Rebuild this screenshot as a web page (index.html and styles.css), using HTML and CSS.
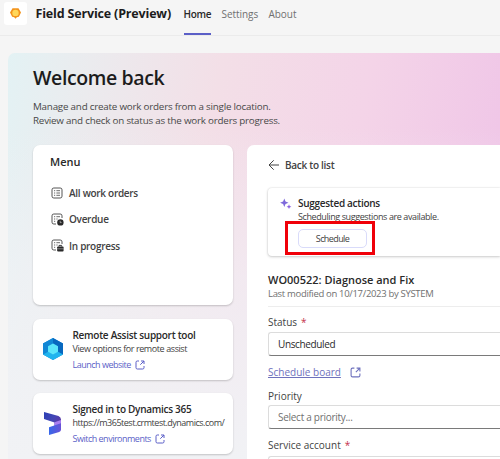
FILE: index.html
```html
<!DOCTYPE html>
<html lang="en">
<head>
<meta charset="utf-8">
<title>Field Service (Preview)</title>
<link rel="stylesheet" href="styles.css">
</head>
<body>
<svg width="0" height="0" class="defs">
  <defs>
    <symbol id="open" viewBox="0 0 10 10"><path d="M4 1H2.3Q1 1 1 2.3V7.7Q1 9 2.3 9H7.7Q9 9 9 7.7V6M6 1H9V4M9 1L5.3 4.7" fill="none" stroke="currentColor" stroke-width="1"/></symbol>
    <symbol id="list" viewBox="0 0 12 12"><rect x="1" y="1" width="10" height="10" rx="1.8" fill="none" stroke="currentColor" stroke-width=".9"/><path d="M3 3.7H4.2M3 6H4.2M3 8.3H4.2M5.4 3.7H9M5.4 6H9M5.4 8.3H9" stroke="currentColor" stroke-width=".8"/></symbol>
    <symbol id="list-cut" viewBox="0 0 12 12"><path d="M5 11H2.8Q1 11 1 9.2V2.8Q1 1 2.8 1H9.2Q11 1 11 2.8V5" fill="none" stroke="currentColor" stroke-width=".9"/><path d="M3 3.7H4.2M3 6H4.2M3 8.3H4.2M5.4 3.7H9M5.4 6H6.6" fill="none" stroke="currentColor" stroke-width=".8"/></symbol>
  </defs>
</svg>
<header class="topbar">
  <div class="logo"><svg width="13" height="13" viewBox="0 0 13 13"><path d="M3.5 1.2H9.5L12 5.4 9.9 9.8 7.8 10.3 6.5 11.8 5.2 10.3 3.1 9.8 1 5.4Z" fill="#f3941c"/><circle cx="6.5" cy="5.9" r="3.2" fill="#ffd75a"/></svg></div>
  <h1 class="app-name">Field Service (Preview)</h1>
  <nav class="tabs"><a class="tab active">Home</a><a class="tab">Settings</a><a class="tab">About</a></nav>
</header>
<main class="hero">
  <h2 class="welcome">Welcome back</h2>
  <p class="intro">Manage and create work orders from a single location.<br>Review and check on status as the work orders progress.</p>
  <div class="columns">
    <aside class="side">
      <section class="card menu">
        <h3 class="menu-title">Menu</h3>
        <a class="menu-item"><svg width="12" height="12"><use href="#list"/></svg><span>All work orders</span></a>
        <a class="menu-item"><svg class="badged" width="13" height="13" viewBox="0 0 13 13"><use href="#list-cut" width="12" height="12"/><circle cx="9.4" cy="9.4" r="3.2" fill="#292929"/><path d="M9.2 7.8V9.6H10.6" fill="none" stroke="#ddd" stroke-width=".6"/></svg><span>Overdue</span></a>
        <a class="menu-item"><svg class="badged" width="13" height="13" viewBox="0 0 13 13"><use href="#list-cut" width="12" height="12"/><path d="M8 7.4V6.4H10.6V7.4" fill="none" stroke="#292929" stroke-width=".9"/><rect x="6.1" y="7.4" width="6.5" height="5" rx="1" fill="#292929"/><path d="M6.1 9.8H12.6" stroke="#ddd" stroke-width=".5"/></svg><span>In progress</span></a>
      </section>
      <section class="card tool">
        <svg class="tool-icon" width="22" height="24" viewBox="0 0 22 24"><path d="M11 1L21 6.5V17.5L11 23 1 17.5V6.5Z" fill="#0c8ee0"/><path d="M11 1L21 6.5V17.5L15.5 14.5V9.2L11 6.5Z" fill="#0868bf"/><path d="M1 6.5L11 1V6.5L6.2 9.2V14.7L1 17.5Z" fill="#1187d5"/><path d="M1 17.5L6.2 14.7 11 17.3 15.5 14.5 21 17.5 11 23Z" fill="#20b4ee"/><path d="M11 6.4L16 9.2V14.8L11 17.6 6 14.8V9.2Z" fill="#5ce6fa"/></svg>
        <div><h4 class="t1">Remote Assist support tool</h4><p class="t2">View options for remote assist</p><a class="link"><span>Launch website</span><svg width="10" height="10"><use href="#open"/></svg></a></div>
      </section>
      <section class="card tool">
        <svg class="tool-icon" width="22" height="24" viewBox="0 0 22 24"><defs><linearGradient id="dyn" x2="1" y2=".5"><stop stop-color="#2b3fb5"/><stop offset=".6" stop-color="#4347b5"/><stop offset="1" stop-color="#5a3aa8"/></linearGradient><linearGradient id="dyn2" x2="1" y2="0"><stop stop-color="#3668ea"/><stop offset="1" stop-color="#6a52d6"/></linearGradient></defs><path d="M2 1L16.5 5Q19 6 19 8.5V13L12.5 15V11.5L2 8Z" fill="url(#dyn)"/><path d="M12.5 11.2L19 9V12.8L12.5 15.2Z" fill="#a97df0"/><path d="M7 16.2L19 12.2V18.5Q19 20.3 17.2 21L7 24Z" fill="url(#dyn2)"/></svg>
        <div><h4 class="t1">Signed in to Dynamics 365</h4><p class="t2 url">https://m365test.crmtest.dynamics.com/</p><a class="link"><span>Switch environments</span><svg width="10" height="10"><use href="#open"/></svg></a></div>
      </section>
    </aside>
    <section class="panel">
      <a class="back"><svg width="12" height="12" viewBox="0 0 12 12"><path d="M5.7 1.3L1 6L5.7 10.7M1 6H11" fill="none" stroke="#424242" stroke-width="1"/></svg><span>Back to list</span></a>
      <div class="suggest">
        <svg class="spark" width="12" height="12" viewBox="0 0 12 12"><path d="M4.3 .6L5.5 3.6 8.5 4.8 5.5 6 4.3 9 3.1 6 .1 4.8 3.1 3.6Z" fill="#7e69db"/><path d="M9 6.3L9.7 8 11.4 8.7 9.7 9.4 9 11.1 8.3 9.4 6.6 8.7 8.3 8Z" fill="#8a62e0"/></svg>
        <div><h4 class="s1">Suggested actions</h4><p class="s2">Scheduling suggestions are available.</p><div class="btn-wrap"><button class="btn">Schedule</button><div class="highlight"></div></div></div>
      </div>
      <h3 class="order">WO00522: Diagnose and Fix</h3>
      <p class="modified">Last modified on 10/17/2023 by SYSTEM</p>
      <label class="label status"><span>Status</span><i>*</i></label>
      <div class="field">Unscheduled</div>
      <a class="board"><span>Schedule board</span><svg width="11" height="11"><use href="#open"/></svg></a>
      <label class="label priority"><span>Priority</span></label>
      <div class="field hint">Select a priority...</div>
      <label class="label account"><span>Service account</span><i>*</i></label>
      <div class="field cut"></div>
    </section>
  </div>
</main>
</body>
</html>
```
FILE: styles.css
```css
* { box-sizing: border-box; }
html, body { height: 100%; overflow: hidden; }
body { margin: 0; background: #f5f5f5; color: #292929; font: 10px/14px "Open Sans", "Noto Sans", sans-serif; }
h1, h2, h3, h4, p { margin: 0; font-weight: 600; }
p { font-weight: 400; }
svg { display: block; flex: none; }
span, h1, h2, h3, h4, p { white-space: nowrap; }
.defs { position: absolute; }
.topbar { height: 36px; display: flex; border-bottom: 1px solid #ebebeb; padding-left: 4px; }
.logo { width: 23px; height: 23px; margin-top: 2px; background: #fff; border-radius: 3px; display: flex; align-items: center; justify-content: center; }
.app-name { width: 148px; margin-left: 8.5px; font-size: 12.5px; line-height: 27px; font-weight: 700; color: #1c1c1c; letter-spacing: -.17px; }
.tabs { display: flex; gap: 11px; }
.tab { font-size: 10px; line-height: 29px; height: 35px; color: #707070; width: 36px; letter-spacing: -.05px; }
.active { width: 27px; font-weight: 600; color: #292929; border-bottom: 2px solid #5b5fc7; letter-spacing: -.3px; }
.hero { margin: 17px 0 0 8px; padding: 13px 0 0 25px; height: 406px; overflow: hidden; border-top-left-radius: 7px; background: linear-gradient(180deg, rgba(241,243,246,0) 18%, rgba(241,243,246,.6) 55%, #f1f2f5 100%), linear-gradient(100deg, #e3f2f4 0%, #ebebee 15%, #f3dfe7 38%, #f4d4e8 65%, #efc4e7 95%); }
.welcome { font-size: 19.5px; line-height: 24px; color: #1c1c1c; letter-spacing: -.38px; }
.intro { margin-top: 10px; font-size: 9.8px; line-height: 14px; color: #484848; letter-spacing: -.21px; }
.columns { display: flex; gap: 14px; margin-top: 17px; }
.side { width: 200px; display: flex; flex-direction: column; gap: 14px; }
.card { background: #fff; border-radius: 7px; box-shadow: 0 1px 2px rgba(0,0,0,.2); }
.menu { height: 160px; padding: 10px 17px; }
.menu-title { font-size: 11px; line-height: 14px; margin-bottom: 11px; }
.menu-item { display: flex; align-items: center; gap: 6px; height: 26.3px; padding-left: 1px; color: #424242; font-weight: 600; letter-spacing: -.29px; }
.badged { margin-right: -1px; }
.tool { height: 61px; display: flex; padding: 9px 0 0 9px; gap: 8.5px; }
.tool + .tool { margin-top: -1px; }
.tool-icon { margin-top: 9px; }
.t1, .t2 { line-height: 14px; }
.t1 { font-size: 10px; letter-spacing: -.28px; }
.t2 { font-size: 9px; line-height: 13px; color: #424242; letter-spacing: -.41px; }
.url { letter-spacing: -.49px; }
.link { display: flex; align-items: center; gap: 4px; height: 19px; color: #5b5fc7; font-size: 9px; letter-spacing: -.5px; }
.panel { flex: 1; height: 314px; background: #fff; border-top-left-radius: 7px; padding: 13px 0 0 21px; min-width: 0; }
.back { display: flex; align-items: center; gap: 5px; height: 14px; color: #424242; font-weight: 600; letter-spacing: -.28px; }
.suggest { display: flex; height: 68px; margin: 16px 0 0; padding: 8px 0 0 12px; gap: 6px; border-radius: 4px 0 0 4px; box-shadow: 0 0 2px rgba(0,0,0,.14), 0 1px 3px rgba(0,0,0,.18); }
.spark { margin-top: 2px; }
.s1 { font-size: 10px; line-height: 14px; letter-spacing: -.3px; }
.s2 { font-size: 9px; line-height: 13px; color: #424242; letter-spacing: -.4px; }
.btn-wrap { position: relative; width: 69px; margin-top: 6px; }
.btn { display: block; width: 69px; height: 19px; padding: 0; background: #fff; border: 1px solid #d9dbfa; border-radius: 5px; font: 9px/17px "Open Sans", sans-serif; letter-spacing: -.6px; color: #424242; }
.highlight { position: absolute; left: -13px; top: -8px; width: 90px; height: 34px; border: 3px solid #f00009; }
.order { font-size: 11px; line-height: 14px; margin-top: 17px; }
.modified { font-size: 9.5px; line-height: 13px; height: 20px; color: #707070; border-bottom: 1px solid #ededed; letter-spacing: -.32px; }
.label { display: flex; gap: 4px; color: #424242; height: 14px; }
.label i { color: #c4314b; font-style: normal; }
.status { margin: 8px 0 3px; }
.field { height: 24px; border: 1px solid #dcdcdc; border-right: 0; border-bottom-color: #7a7a7a; border-radius: 3px 0 0 3px; padding-left: 9px; line-height: 22px; letter-spacing: -.36px; }
.hint { color: #707070; letter-spacing: -.28px; }
.cut { height: 8px; border-bottom: 0; border-radius: 3px 0 0; }
.board { display: flex; align-items: center; gap: 9px; height: 14px; margin: 9px 0 10px; color: #6e71bd; }
.board span { text-decoration: underline; }
.priority { margin-bottom: 2px; }
.account { margin: 9px 0 4px; }
```
